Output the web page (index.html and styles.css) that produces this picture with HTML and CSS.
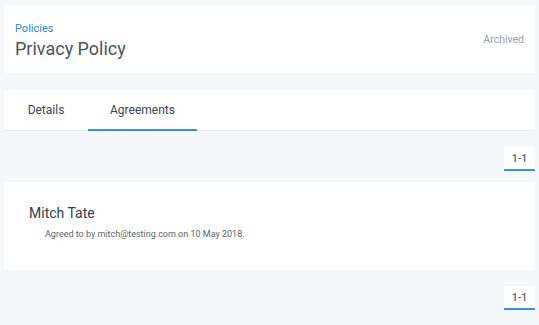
FILE: index.html
```html
<!DOCTYPE html>
<html lang="en">
<head>
  <meta charset="UTF-8" />
  <title>Privacy Policy</title>
  <link rel="stylesheet" href="styles.css">
</head>
<body>
  <div class="page-header">
    <div class="titles">
      <a class="crumb" href="#">Policies</a>
      <h1>Privacy Policy</h1>
    </div>
    <span class="status">Archived</span>
  </div>

  <div class="tabs">
    <a class="tab" href="#">Details</a>
    <a class="tab active" href="#">Agreements</a>
  </div>

  <div class="pager"><span class="range">1-1</span></div>

  <div class="agreement">
    <h2>Mitch Tate</h2>
    <p>Agreed to by mitch@testing.com on 10 May 2018.</p>
  </div>

  <div class="pager"><span class="range">1-1</span></div>
</body>
</html>
```

FILE: styles.css
```css
body {
  margin: 0;
  padding: 5px 4px 0;
  font-family: Roboto, 'Liberation Sans', sans-serif;
  background: #f5f7fa;
  color: #3a4552;
}
a {
  text-decoration: none;
}
.page-header {
  display: flex;
  justify-content: space-between;
  height: 68px;
  padding: 16px 11px 0;
  box-sizing: border-box;
  background: #fff;
}
.crumb {
  display: block;
  color: #2b8ad4;
  font-size: 11px;
  line-height: 16px;
}
h1 {
  margin: 1px 0 0;
  font-size: 18px;
  font-weight: 400;
  line-height: 22px;
  color: #4a5460;
}
.status {
  align-self: center;
  margin-top: -16px;
  color: #97a2ae;
  font-size: 10.5px;
}
.tabs {
  display: flex;
  margin-top: 17px;
  background: #fff;
  border-bottom: 1px solid #e3e8ee;
}
.tab {
  min-width: 84px;
  box-sizing: border-box;
  padding: 0 22px;
  text-align: center;
  height: 41px;
  line-height: 41px;
  font-size: 12px;
  color: #3a4552;
  border-bottom: 2px solid transparent;
  margin-bottom: -1px;
}
.tab.active {
  border-bottom-color: #3a92d8;
}
.pager {
  display: flex;
  justify-content: flex-end;
  margin: 16px 0 11px;
}
.range {
  width: 31px;
  height: 22px;
  line-height: 23px;
  text-align: center;
  background: #fff;
  font-size: 10.5px;
  font-weight: 500;
  color: #56606b;
  border-bottom: 2px solid #3a92d8;
}
.agreement {
  background: #fff;
  height: 88px;
  padding: 23px 25px 0;
  box-sizing: border-box;
}
h2 {
  margin: 0;
  font-size: 14px;
  font-weight: 400;
  line-height: 17px;
  color: #333d48;
}
p {
  margin: 6px 0 0 16px;
  font-size: 9px;
  line-height: 12px;
  color: #5a646f;
}
```
